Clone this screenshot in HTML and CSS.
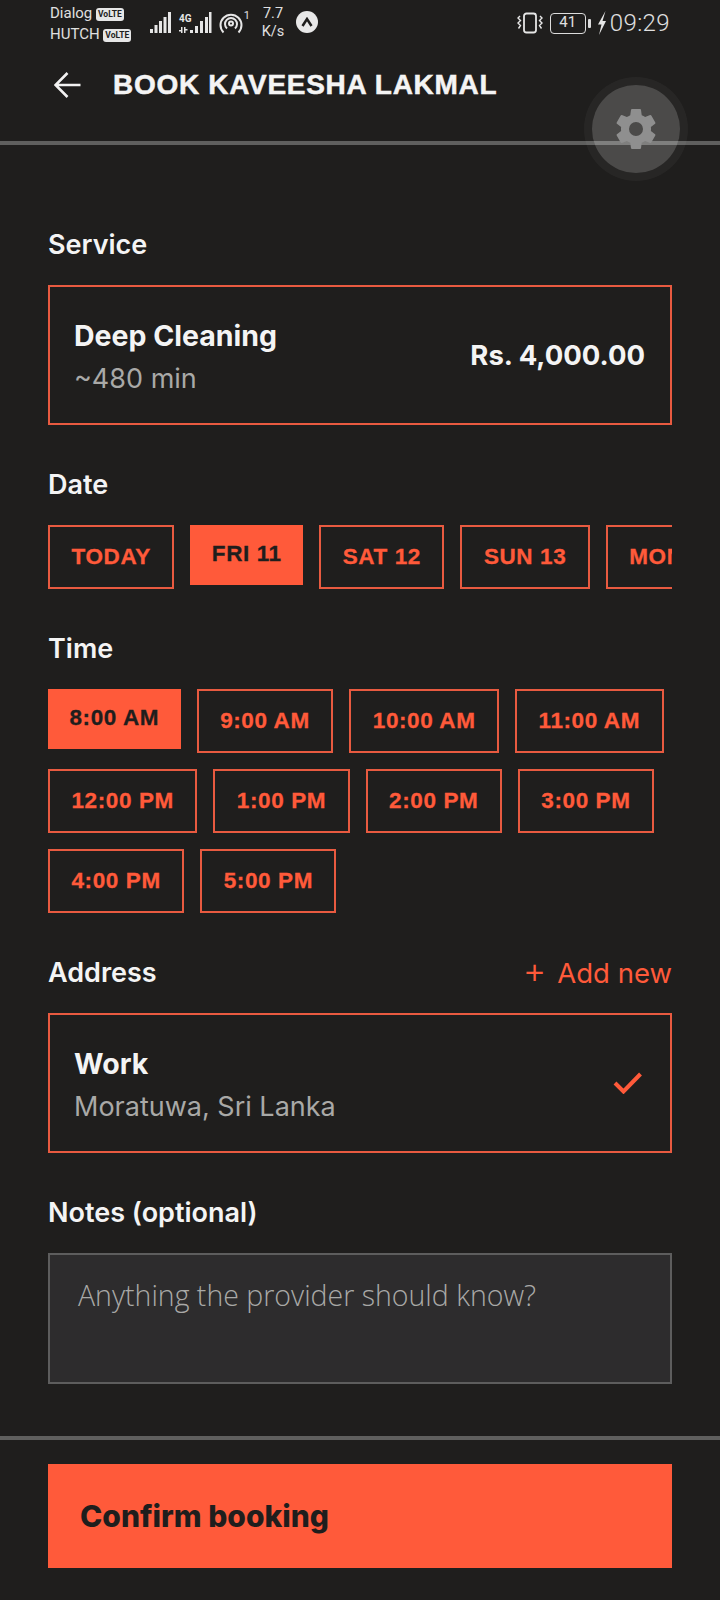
FILE: index.html
```html
<!DOCTYPE html>
<html>
  <head lang="en">
    <meta charset="UTF-8" />
    <title>Book Kaveesha Lakmal</title>
    <link rel="stylesheet" href="styles.css">
  </head>

  <body>
    <div class="status">
      <div class="carriers">
        <div class="carrier">Dialog <span class="volte">VoLTE</span></div>
        <div class="carrier">HUTCH <span class="volte">VoLTE</span></div>
      </div>
      <svg class="signal" width="62" height="21" viewBox="0 0 62 21">
        <g fill="#e6e6e6">
          <rect x="0" y="17" width="3" height="4" /><rect x="4.500" y="13" width="3" height="8" /><rect x="9" y="9" width="3" height="12" /><rect x="13.500" y="5" width="3" height="16" /><rect x="18" y="0" width="3" height="21" />
          <text x="29" y="10" class="tiny">4G</text>
          <path d="M31 15v6h1.500v-6zM34 15v6h1.500v-6zM29 18h2v1.500h-2zM35.500 17h2v1.500h-2z" />
          <rect x="40" y="18" width="3" height="3" /><rect x="45" y="14" width="3" height="7" /><rect x="50" y="9" width="3" height="12" /><rect x="55" y="5" width="3" height="16" /><rect x="59" y="0" width="2.500" height="21" />
        </g>
      </svg>
      <svg class="hotspot" width="24" height="22" viewBox="0 0 24 22">
        <g fill="none" stroke="#e6e6e6" stroke-width="2">
          <path d="M4.500 20.500a10.500 10.500 0 1 1 15 0" />
          <path d="M8 16.500a6 6 0 1 1 8 0" />
          <circle cx="12" cy="11.500" r="2" />
        </g>
      </svg>
      <span class="hot-num">1</span>
      <div class="speed">7.7<br />K/s</div>
      <div class="app-dot"><svg width="14" height="10" viewBox="0 0 14 10"><path d="M2.500 9L7 2l4.500 7" fill="none" stroke="#1f1e1d" stroke-width="2.500" /></svg></div>
      <div class="status-right">
        <svg width="26" height="22" viewBox="0 0 26 22">
          <g fill="none" stroke="#e6e6e6" stroke-width="1.800">
            <rect x="7" y="1.500" width="12" height="19" rx="2.500" />
            <path d="M3 4l-2 2 2.500 2.500-2.500 2.500 2.500 2.500-2 3M23 4l2 2-2.500 2.500 2.500 2.500-2.500 2.500 2 3" stroke-width="1.400" />
          </g>
        </svg>
        <div class="battery"><span class="battery-num">41</span></div>
        <div class="battery-nub"></div>
        <svg width="10" height="24" viewBox="0 0 10 24"><path d="M8.500 0L1 13.500h3.500L2 24l7-14H5.500z" fill="#e6e6e6" /></svg>
        <span class="clock">09:29</span>
      </div>
    </div>

    <div class="topbar">
      <svg class="back" width="28" height="28" viewBox="0 0 28 28">
        <path d="M26.500 14H2M13.500 2L1.500 14l12 12" fill="none" stroke="#f2f2f2" stroke-width="2.600" />
      </svg>
      <h1 class="title">BOOK KAVEESHA LAKMAL</h1>
    </div>

    <div class="fab">
      <div class="fab-in">
        <svg width="48" height="48" viewBox="0 0 24 24">
          <path fill="#8f8f8f" fill-rule="evenodd" d="M19.430 12.980c.04-.320.070-.640.070-.980s-.030-.660-.070-.980l2.110-1.650c.190-.150.240-.420.120-.640l-2-3.460c-.120-.220-.390-.300-.610-.220l-2.490 1c-.520-.400-1.080-.730-1.690-.980l-.380-2.650A.488.488 0 0 0 14 2h-4c-.250 0-.460.180-.490.420l-.380 2.650c-.610.250-1.170.590-1.690.980l-2.490-1c-.230-.090-.490 0-.610.220l-2 3.460c-.130.220-.070.490.120.640l2.110 1.650c-.040.320-.070.650-.070.980s.030.660.070.980l-2.110 1.650c-.190.150-.240.420-.120.640l2 3.460c.120.220.390.300.610.220l2.490-1c.520.400 1.080.730 1.690.980l.380 2.650c.030.240.240.420.490.420h4c.250 0 .460-.180.490-.420l.380-2.650c.610-.250 1.170-.590 1.690-.980l2.490 1c.230.090.490 0 .610-.220l2-3.460c.120-.220.070-.490-.120-.640zM12 15.500a3.500 3.500 0 1 1 0-7 3.500 3.500 0 0 1 0 7z" />
        </svg>
      </div>
    </div>

    <div class="main">
      <div class="sec first">
        <div class="label">Service</div>
        <div class="card">
          <div class="card-text">
            <div class="card-name">Deep Cleaning</div>
            <div class="card-sub">~480 min</div>
          </div>
          <div class="price">Rs. 4,000.00</div>
        </div>
      </div>

      <div class="sec">
        <div class="label">Date</div>
        <div class="chips nowrap">
          <div class="chip">TODAY</div>
          <div class="chip on">FRI 11</div>
          <div class="chip">SAT 12</div>
          <div class="chip">SUN 13</div>
          <div class="chip">MON 14</div>
        </div>
      </div>

      <div class="sec">
        <div class="label">Time</div>
        <div class="chips">
          <div class="chip on">8:00 AM</div>
          <div class="chip">9:00 AM</div>
          <div class="chip">10:00 AM</div>
          <div class="chip">11:00 AM</div>
          <div class="chip">12:00 PM</div>
          <div class="chip">1:00 PM</div>
          <div class="chip">2:00 PM</div>
          <div class="chip">3:00 PM</div>
          <div class="chip">4:00 PM</div>
          <div class="chip">5:00 PM</div>
        </div>
      </div>

      <div class="sec">
        <div class="label-row">
          <div class="label">Address</div>
          <div class="add"><span class="plus">+</span>Add new</div>
        </div>
        <div class="card">
          <div class="card-text">
            <div class="card-name">Work</div>
            <div class="card-sub">Moratuwa, Sri Lanka</div>
          </div>
          <svg class="tick" width="30" height="22" viewBox="0 0 30 22">
            <path d="M2 11l8.500 8.500L27.500 2" fill="none" stroke="#ff5a3a" stroke-width="4" />
          </svg>
        </div>
      </div>

      <div class="sec">
        <div class="label">Notes (optional)</div>
        <div class="notes">Anything the provider should know?</div>
      </div>
    </div>

    <div class="footer">
      <div class="confirm">Confirm booking</div>
    </div>
  </body>
</html>
```

FILE: styles.css
```css
* {
  box-sizing: border-box;
}

body {
  margin: 0;
  width: 720px;
  height: 1600px;
  overflow: hidden;
  position: relative;
  background-color: #1f1e1d;
  color: #f4f4f4;
  font-family: "Inter", "Liberation Sans", sans-serif;
}

/* status bar */
.status {
  height: 58px;
  display: flex;
  align-items: flex-start;
  padding-left: 50px;
  color: #e0e0e0;
}

.carriers {
  width: 100px;
  flex-shrink: 0;
  font-family: "Roboto", sans-serif;
  font-size: 15px;
  line-height: 21px;
  padding-top: 3px;
}

.carrier {
  white-space: nowrap;
}

.volte {
  display: inline-block;
  background: #e6e6e6;
  color: #1f1e1d;
  border-radius: 3px;
  font-size: 8.500px;
  font-weight: 700;
  line-height: 13px;
  height: 13px;
  padding: 0 2px;
  vertical-align: 1px;
}

.signal {
  margin-top: 12px;
  flex-shrink: 0;
}

.tiny {
  font-family: "Roboto", sans-serif;
  font-size: 10px;
  font-weight: 700;
}

.hotspot {
  margin-left: 7px;
  margin-top: 12px;
}

.hot-num {
  font-family: "Roboto", sans-serif;
  font-size: 11px;
  margin-top: 9px;
  width: 7px;
  text-align: right;
}

.speed {
  font-family: "Roboto", sans-serif;
  font-size: 14.500px;
  line-height: 18px;
  width: 28px;
  text-align: center;
  margin-left: 9px;
  margin-top: 5px;
}

.app-dot {
  width: 22px;
  height: 22px;
  border-radius: 50%;
  background: #e8e8e8;
  margin-left: 9px;
  margin-top: 11px;
  display: flex;
  align-items: center;
  justify-content: center;
}

.status-right {
  margin-left: auto;
  margin-right: 50px;
  margin-top: 11px;
  display: flex;
  align-items: center;
  height: 24px;
}

.battery {
  width: 36px;
  height: 21px;
  margin-left: 7px;
  border: 1.500px solid #dcdcdc;
  border-radius: 4px;
  display: flex;
  align-items: center;
  justify-content: center;
}

.battery-num {
  font-family: "Roboto", sans-serif;
  font-size: 15px;
  line-height: 14px;
  margin-top: -2px;
}

.battery-nub {
  width: 3px;
  height: 9px;
  margin-left: 2px;
  margin-right: 6px;
  background: #dcdcdc;
  border-radius: 1px;
}

.clock {
  font-family: "Roboto", sans-serif;
  font-weight: 300;
  font-size: 24px;
  letter-spacing: 0.400px;
  margin-left: 3px;
}

/* title bar */
.topbar {
  height: 87px;
  padding: 0 0 29px 54px;
  display: flex;
  align-items: center;
  border-bottom: 4px solid #5f5f5e;
}

.back {
  flex-shrink: 0;
}

.title {
  margin: 0 0 0 31px;
  font-family: "Liberation Sans", sans-serif;
  font-size: 28px;
  font-weight: 700;
  letter-spacing: 0.700px;
  -webkit-text-stroke: 0.500px #f4f4f4;
  white-space: nowrap;
}

/* settings bubble sitting over the title rule */
.fab {
  position: absolute;
  left: 584px;
  top: 77px;
  width: 104px;
  height: 104px;
  border-radius: 50%;
  background: rgba(255, 255, 255, 0.04);
  display: flex;
  align-items: center;
  justify-content: center;
}

.fab-in {
  width: 88px;
  height: 88px;
  border-radius: 50%;
  background: rgba(255, 255, 255, 0.17);
  display: flex;
  align-items: center;
  justify-content: center;
}

.main {
  padding: 0 48px;
}

.sec {
  margin-top: 44px;
}

.sec.first {
  margin-top: 84px;
}

.label {
  font-size: 27px;
  font-weight: 600;
  line-height: 32px;
  margin-bottom: 24px;
}

.label-row {
  display: flex;
  justify-content: space-between;
}

.add {
  font-size: 27.500px;
  line-height: 32px;
  color: #ff5a3a;
}

.plus {
  font-size: 36px;
  font-weight: 300;
  line-height: 0;
  margin-right: 11px;
}

.card {
  height: 140px;
  border: 2px solid #e85a40;
  padding: 0 25px 0 24px;
  display: flex;
  align-items: center;
  justify-content: space-between;
}

.card-text {
  padding-top: 5px;
}

.card-name {
  font-size: 28.500px;
  font-weight: 700;
  line-height: 36px;
  margin-bottom: 7px;
}

.card-sub {
  font-size: 27px;
  line-height: 36px;
  color: #a9a9a7;
}

.price {
  font-size: 27.500px;
  font-weight: 700;
}

.tick {
  margin-right: 2px;
}

.chips {
  display: flex;
  flex-wrap: wrap;
  align-items: flex-start;
  gap: 16px;
}

.chips.nowrap {
  flex-wrap: nowrap;
  overflow: hidden;
}

.chip {
  flex-shrink: 0;
  height: 64px;
  line-height: 60px;
  padding: 0 21.500px;
  border: 2px solid #e85a40;
  color: #ff5a3a;
  font-family: "Liberation Sans", sans-serif;
  font-size: 22.500px;
  font-weight: 700;
  letter-spacing: 0.600px;
  -webkit-text-stroke: 0.300px #ff5a3a;
  white-space: nowrap;
}

.chip.on {
  height: 60px;
  line-height: 58px;
  border: 0;
  background: #ff5a3a;
  color: #1f1e1d;
  -webkit-text-stroke: 0.300px #1f1e1d;
}

.notes {
  height: 131px;
  border: 2px solid #5d5d5d;
  background: #2d2c2d;
  padding: 21px 28px;
  font-family: "Open Sans", sans-serif;
  font-weight: 300;
  font-size: 28.500px;
  line-height: 38px;
  color: #a9a9a7;
}

.footer {
  margin-top: 52px;
  border-top: 4px solid #5f5f5e;
  padding: 24px 48px 0;
}

.confirm {
  height: 104px;
  background: #ff5a3a;
  color: #1f1e1d;
  padding-left: 32px;
  font-size: 30px;
  font-weight: 800;
  line-height: 104px;
}
```
